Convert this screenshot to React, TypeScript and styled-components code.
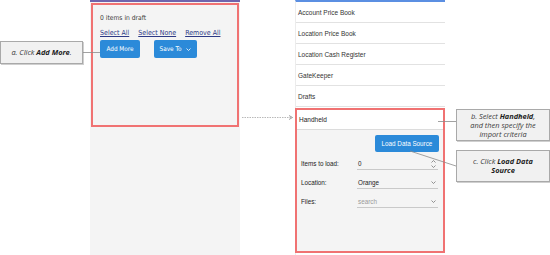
import React from 'react';
import styled, { createGlobalStyle } from 'styled-components';

const GlobalStyle = createGlobalStyle`
  html, body {
    margin: 0;
    padding: 0;
    background: #ffffff;
  }
  body {
    font-family: "Liberation Sans", Arial, sans-serif;
  }
`;

const Page = styled.div`
  position: relative;
  display: flex;
  width: 550px;
  height: 255px;
  overflow: hidden;
  background: #ffffff;
`;

const CalloutColumn = styled.div<{ $width: number }>`
  display: flex;
  flex-direction: column;
  width: ${(p) => p.$width}px;
  flex-shrink: 0;
`;

const Callout = styled.div<{ $top: number; $height: number; $width: number }>`
  margin-top: ${(p) => p.$top}px;
  width: ${(p) => p.$width}px;
  height: ${(p) => p.$height}px;
  box-sizing: border-box;
  display: flex;
  align-items: center;
  justify-content: center;
  text-align: center;
  background: #f1f1f1;
  border: 1px solid #a9a9a9;
  box-shadow: 1px 1px 0 #cfcfcf;
  font-family: "Open Sans", "Noto Sans", sans-serif;
  font-style: italic;
  font-size: 7.4px;
  line-height: 9px;
  color: #3a3a3a;
  b {
    font-weight: 700;
    color: #1e1e1e;
  }
`;

const DraftPanel = styled.section`
  width: 150px;
  flex-shrink: 0;
  background: #f4f4f4;
  border-top: 2px solid #6f64ad;
  box-sizing: border-box;
  padding: 1px 1px 0;
`;

const Highlight = styled.div<{ $height: number }>`
  height: ${(p) => p.$height}px;
  box-sizing: border-box;
  border: 2px solid #f07272;
`;

const DraftBody = styled.div`
  padding: 9px 7px;
  font-family: "DejaVu Sans Condensed", "DejaVu Sans", sans-serif;
  color: #3a3a3a;
`;

const DraftCount = styled.div`
  font-size: 6.7px;
  line-height: 9px;
`;

const LinkRow = styled.div`
  display: flex;
  gap: 9px;
  margin-top: 6px;
`;

const TextLink = styled.a`
  font-size: 7px;
  line-height: 9px;
  color: #2d3a86;
  text-decoration: underline;
  cursor: pointer;
`;

const ButtonRow = styled.div`
  display: flex;
  gap: 14px;
  margin-top: 2px;
`;

const Button = styled.button<{ $width: number }>`
  width: ${(p) => p.$width}px;
  height: 18px;
  padding: 0;
  border: none;
  border-radius: 2px;
  background: #2b8ad9;
  color: #ffffff;
  font-family: "DejaVu Sans Condensed", "DejaVu Sans", sans-serif;
  font-size: 6.4px;
  display: inline-flex;
  align-items: center;
  justify-content: center;
  gap: 5px;
`;

const Gap = styled.div<{ $width: number }>`
  width: ${(p) => p.$width}px;
  flex-shrink: 0;
`;

const ImportPanel = styled.section`
  width: 150px;
  flex-shrink: 0;
  display: flex;
  flex-direction: column;
  border-top: 2px solid #5b8fe2;
  border-left: 1px solid #ececec;
  box-sizing: border-box;
`;

const SourceRow = styled.div`
  height: 21px;
  box-sizing: border-box;
  display: flex;
  align-items: center;
  padding-left: 2px;
  border-bottom: 1px solid #e2e2e2;
  font-size: 6.5px;
  color: #333333;
`;

const SourceHighlight = styled(Highlight)`
  margin-top: 1px;
  margin-left: -1px;
  display: flex;
  flex-direction: column;
`;

const ActiveRow = styled.div`
  height: 19px;
  display: flex;
  align-items: center;
  padding-left: 2px;
  background: #ffffff;
  border-bottom: 1px solid #dcdcdc;
  font-size: 6.5px;
  color: #222222;
`;

const ImportBody = styled.div`
  flex: 1;
  background: #f4f4f4;
  padding: 5px 4px 0 4px;
  display: flex;
  flex-direction: column;
`;

const LoadButton = styled(Button)`
  align-self: flex-end;
  height: 17px;
  font-family: "Liberation Sans", Arial, sans-serif;
  font-size: 6.3px;
`;

const FieldRow = styled.div<{ $first?: boolean }>`
  display: grid;
  grid-template-columns: 56px 81px;
  align-items: end;
  margin-top: ${(p) => (p.$first ? 6 : 7)}px;
  font-size: 6.3px;
  color: #222222;
`;

const FieldLabel = styled.div`
  line-height: 9px;
  padding-bottom: 2px;
`;

const FieldSelect = styled.div<{ $placeholder?: boolean }>`
  position: relative;
  height: 11px;
  display: flex;
  align-items: center;
  padding-left: 1px;
  border-bottom: 1px solid #c9c9c9;
  color: ${(p) => (p.$placeholder ? '#9a9a9a' : '#222222')};
`;

const Chevrons = styled.div`
  position: absolute;
  right: 2px;
  top: 0;
  bottom: 0;
  display: flex;
  flex-direction: column;
  justify-content: center;
  gap: 2px;
`;

const Overlay = styled.svg`
  position: absolute;
  left: 0;
  top: 0;
  pointer-events: none;
`;

function Chevron({ up = false, color = '#777777' }: { up?: boolean; color?: string }) {
  return (
    <svg width="5" height="3" viewBox="0 0 5 3">
      <path
        d={up ? 'M0.5 2.5 L2.5 0.5 L4.5 2.5' : 'M0.5 0.5 L2.5 2.5 L4.5 0.5'}
        fill="none"
        stroke={color}
        strokeWidth="0.8"
      />
    </svg>
  );
}

const sources = [
  'Account Price Book',
  'Location Price Book',
  'Location Cash Register',
  'GateKeeper',
  'Drafts',
];

export default function App() {
  return (
    <>
      <GlobalStyle />
      <Page>
        <CalloutColumn $width={90}>
          <Callout $top={41} $height={23} $width={83}>
            <span>
              a. Click <b>Add More</b>.
            </span>
          </Callout>
        </CalloutColumn>

        <DraftPanel>
          <Highlight $height={124}>
            <DraftBody>
              <DraftCount>0 items in draft</DraftCount>
              <LinkRow>
                <TextLink>Select All</TextLink>
                <TextLink>Select None</TextLink>
                <TextLink>Remove All</TextLink>
              </LinkRow>
              <ButtonRow>
                <Button $width={40}>Add More</Button>
                <Button $width={43}>
                  Save To <Chevron color="#ffffff" />
                </Button>
              </ButtonRow>
            </DraftBody>
          </Highlight>
        </DraftPanel>

        <Gap $width={55} />

        <ImportPanel>
          {sources.map((s) => (
            <SourceRow key={s}>{s}</SourceRow>
          ))}
          <SourceHighlight $height={145}>
            <ActiveRow>Handheld</ActiveRow>
            <ImportBody>
              <LoadButton $width={64}>Load Data Source</LoadButton>
              <FieldRow $first>
                <FieldLabel>Items to load:</FieldLabel>
                <FieldSelect>
                  0
                  <Chevrons>
                    <Chevron up />
                    <Chevron />
                  </Chevrons>
                </FieldSelect>
              </FieldRow>
              <FieldRow>
                <FieldLabel>Location:</FieldLabel>
                <FieldSelect>
                  Orange
                  <Chevrons>
                    <Chevron />
                  </Chevrons>
                </FieldSelect>
              </FieldRow>
              <FieldRow>
                <FieldLabel>Files:</FieldLabel>
                <FieldSelect $placeholder>
                  search
                  <Chevrons>
                    <Chevron />
                  </Chevrons>
                </FieldSelect>
              </FieldRow>
            </ImportBody>
          </SourceHighlight>
        </ImportPanel>

        <Gap $width={11} />

        <CalloutColumn $width={94}>
          <Callout $top={109} $height={32} $width={94}>
            <span>
              b. Select <b>Handheld</b>,
              <br />
              and then specify the
              <br />
              import criteria
            </span>
          </Callout>
          <Callout $top={9} $height={32} $width={94}>
            <span>
              c. Click <b>Load Data</b>
              <br />
              <b>Source</b>
            </span>
          </Callout>
        </CalloutColumn>

        <Overlay width={550} height={255}>
          <line x1="83" y1="52.5" x2="100" y2="52.5" stroke="#8a8a8a" strokeWidth="0.8" />
          <line
            x1="242"
            y1="117.5"
            x2="291"
            y2="117.5"
            stroke="#8a8a8a"
            strokeWidth="0.6"
            strokeDasharray="1.5 1"
          />
          <path d="M289 115.5 L292.5 117.5 L289 119.5" fill="none" stroke="#777" strokeWidth="0.7" />
          <line x1="438" y1="121.5" x2="456" y2="121.5" stroke="#8a8a8a" strokeWidth="0.8" />
          <line x1="410" y1="151" x2="456" y2="166" stroke="#8a8a8a" strokeWidth="0.8" />
        </Overlay>
      </Page>
    </>
  );
}
